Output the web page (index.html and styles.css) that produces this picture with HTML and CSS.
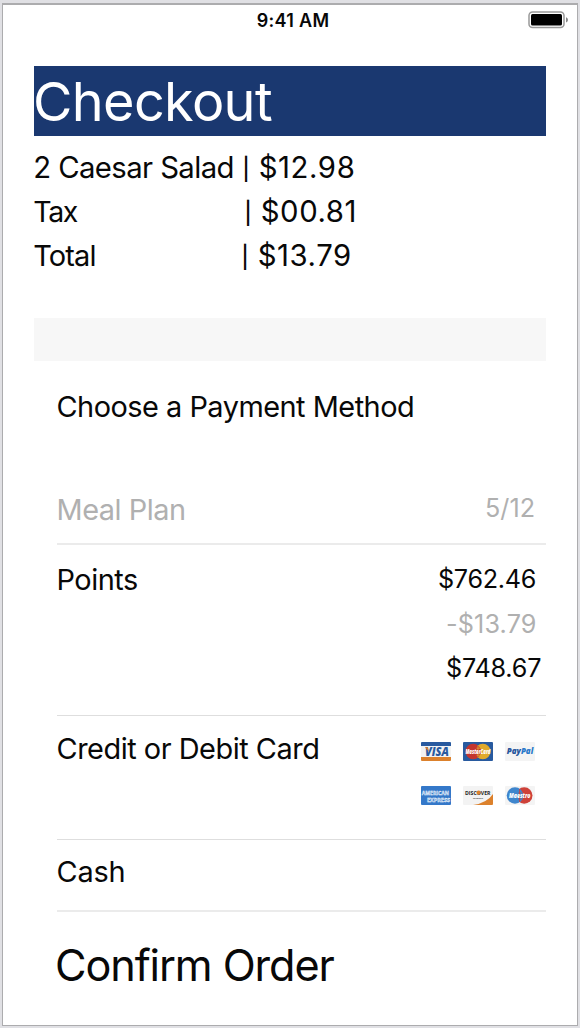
FILE: index.html
```
<!DOCTYPE html>
<html lang="en">
<head>
<meta charset="utf-8">
<title>Checkout</title>
<link rel="stylesheet" href="styles.css">
</head>
<body>
<main class="phone">
  <header class="status">
    <span class="time">9:41 AM</span>
    <svg class="battery" width="42" height="18" viewBox="0 0 42 18">
      <rect x="1" y="1" width="35" height="15.5" rx="3.5" fill="#fff" stroke="#999" stroke-width="1.5"/>
      <rect x="3" y="3" width="31" height="11.5" rx="1.5" fill="#000"/>
      <path d="M38 6.2c2.6.8 2.6 4.4 0 5.2z" fill="#888"/>
    </svg>
  </header>
  <h1 class="title">Checkout</h1>
  <section class="summary">
    <div class="line"><span class="item">2 Caesar Salad</span><span class="price"><span class="pipe">|</span> $12.98</span></div>
    <div class="line"><span class="item tax">Tax</span><span class="price price-tax"><span class="pipe">|</span> $00.81</span></div>
    <div class="line"><span class="item total">Total</span><span class="price price-total"><span class="pipe">|</span> $13.79</span></div>
  </section>
  <div class="band"></div>
  <section class="methods">
    <h2 class="heading">Choose a Payment Method</h2>
    <div class="row meal">
      <span class="label muted">Meal Plan</span>
      <div class="values"><span class="fraction muted">5/12</span></div>
    </div>
    <div class="row points">
      <span class="label">Points</span>
      <div class="values">
        <span class="before">$762.46</span>
        <span class="change muted">-$13.79</span>
        <span class="after">$748.67</span>
      </div>
    </div>
    <div class="row card">
      <span class="label">Credit or Debit Card</span>
      <div class="brands">
        <svg viewBox="0 0 30 19"><rect width="30" height="19" rx="1" fill="#f3f3f3"/><path d="M0 4V1q0-1 1-1h28q1 0 1 1v3z" fill="#285a9f"/><path d="M0 15h30v3q0 1-1 1H1q-1 0-1-1z" fill="#dc812c"/><text x="4" y="13.6" font-size="11.5" textLength="24" lengthAdjust="spacingAndGlyphs" class="brand" fill="#285a9f">VISA</text><path d="M3.8 5.2h3l1.4 4.5z" fill="#dc812c"/></svg>
        <svg viewBox="0 0 30 19"><rect width="30" height="19" rx="1" fill="#285a9f"/><circle cx="19.8" cy="9.5" r="7.8" fill="#e1aa2c"/><circle cx="10.2" cy="9.5" r="7.8" fill="#c3352f"/><path d="M15 3.4v12.2M13.5 6.2h4M13.5 13.2h4" stroke="#e1aa2c" stroke-width=".8"/><text x="2.4" y="12" font-size="6.4" textLength="25" lengthAdjust="spacingAndGlyphs" class="brand" fill="#fff">MasterCard</text></svg>
        <svg viewBox="0 0 30 19"><rect width="30" height="19" rx="1" fill="#f4f4f4"/><text x="1.8" y="12.2" font-size="8" textLength="26.5" lengthAdjust="spacingAndGlyphs" class="brand" fill="#25559c">Pay<tspan fill="#2978c9">Pal</tspan></text></svg>
        <svg viewBox="0 0 30 19"><rect width="30" height="19" rx="1" fill="#3478c9"/><text x=".8" y="9" font-size="5.7" textLength="27" lengthAdjust="spacingAndGlyphs" class="plain outline">AMERICAN</text><text x="6" y="15.8" font-size="5.7" textLength="23" lengthAdjust="spacingAndGlyphs" class="plain outline">EXPRESS</text></svg>
        <svg viewBox="0 0 30 19"><rect width="30" height="19" rx="1" fill="#f3f3f3"/><path d="M10 19Q24 17 30 8v10q0 1-1 1z" fill="#dc812c"/><text x="2" y="8.6" font-size="5.7" textLength="25.5" lengthAdjust="spacingAndGlyphs" class="plain" fill="#252525">DISCOVER</text><circle cx="15.6" cy="6.6" r="2.1" fill="#dc812c"/><text x="10" y="12.6" font-size="2.2" textLength="10" lengthAdjust="spacingAndGlyphs" class="plain" fill="#444">NETWORK</text></svg>
        <svg viewBox="0 0 30 19"><rect width="30" height="19" rx="1" fill="#f4f4f4"/><circle cx="19.2" cy="9.5" r="8.3" fill="#ce4139"/><circle cx="10" cy="9.5" r="8.3" fill="#3f86cd"/><path d="M14.5 3v13M13.4 7h3M13.4 12.8h3" stroke="#ce4139" stroke-width=".8"/><text x="4" y="12" font-size="6.8" textLength="21.5" lengthAdjust="spacingAndGlyphs" class="brand" fill="#fff">Maestro</text></svg>
      </div>
    </div>
    <div class="row cash"><span class="label">Cash</span></div>
    <div class="confirm">Confirm Order</div>
  </section>
</main>
</body>
</html>
```
FILE: styles.css
```
* { box-sizing: border-box; }
body {
  margin: 0;
  height: 1028px;
  padding: 3px 2px 2px;
  background: #e0e0e4;
  color: #080808;
  font-family: Inter, "Liberation Sans", sans-serif;
}
.phone {
  height: 1023px;
  padding: 0 31px;
  background: #fff;
  border: 1px solid #acacae;
  border-top-width: 2px;
  display: flex;
  flex-direction: column;
}
.status {
  height: 61px;
  display: grid;
  grid-template-columns: 1fr auto 1fr;
  margin: 0 -25px 0 -31px;
}
.time {
  grid-column: 2;
  margin: 0 -6px 0 6px;
  line-height: 32px;
  font-size: 18px;
  font-weight: 600;
  letter-spacing: .3px;
}
.battery { justify-self: end; margin: 6px 1px 0 0; }
.title {
  margin: 0;
  height: 70px;
  line-height: 71px;
  background: #1a3870;
  color: #fff;
  font-size: 54px;
  font-weight: 400;
  letter-spacing: -.65px;
  text-indent: -1px;
}
.summary { padding-top: 10px; height: 182px; }
.line { display: flex; height: 44.2px; line-height: 44.2px; font-size: 29.3px; white-space: nowrap; }
.item { width: 209px; margin-left: -.7px; letter-spacing: -.6px; }
.tax { font-size: 28.5px; letter-spacing: -1.4px; }
.total { font-size: 29px; letter-spacing: -.9px; }
.price { letter-spacing: .6px; }
.pipe { display: inline-block; width: 7.5px; font-size: 22px; font-weight: 500; line-height: 1; transform: translateY(-1px); }
.price-tax { margin-left: 2px; }
.price-total { margin-left: -1px; }
.band { height: 43px; background: #f7f7f7; }
.methods { margin-left: 23px; }
.heading {
  margin: 24px 0 55px -.5px;
  line-height: 44px;
  font-size: 28.9px;
  font-weight: 400;
  letter-spacing: -.5px;
}
.row { display: flex; justify-content: space-between; border-bottom: 1px solid #dedede; }
.label { margin-left: -.5px; font-size: 28.9px; line-height: 44px; letter-spacing: -.47px; }
.muted { color: #b0b0b0; }
.values {
  width: 108px;
  display: flex;
  flex-direction: column;
  font-size: 25.2px;
  line-height: 44.4px;
}
.meal { height: 61px; padding-top: 4px; border-bottom: 2px solid #ebebeb; }
.fraction { margin: -2px 0 0 47px; letter-spacing: .05px; }
.points { height: 171px; padding-top: 13px; }
.points .values { margin-top: -.9px; }
.before { letter-spacing: -.3px; }
.change { margin-left: 8px; letter-spacing: .15px; }
.after { margin-left: 8px; letter-spacing: -.22px; }
.card { height: 124px; padding-top: 11px; }
.brands {
  display: grid;
  grid-template-columns: repeat(3, 30px);
  grid-auto-rows: 19px;
  gap: 25px 12px;
  margin: 15px 11px 0 0;
  align-content: start;
}
.brands svg { width: 30px; height: 19px; display: block; overflow: visible; }
.brand { font-family: "Open Sans", sans-serif; font-weight: 800; font-style: italic; }
.plain { font-family: "Open Sans", sans-serif; font-weight: 700; }
.outline { fill: #79a9df; stroke: #fff; stroke-width: .35px; }
.cash { height: 72px; padding-top: 10px; border-bottom: 2px solid #ebebeb; }
.cash .label { letter-spacing: -.2px; }
.confirm {
  margin: 23px 0 0 -2px;
  line-height: 60px;
  font-size: 43.2px;
  letter-spacing: -1.08px;
}
```
